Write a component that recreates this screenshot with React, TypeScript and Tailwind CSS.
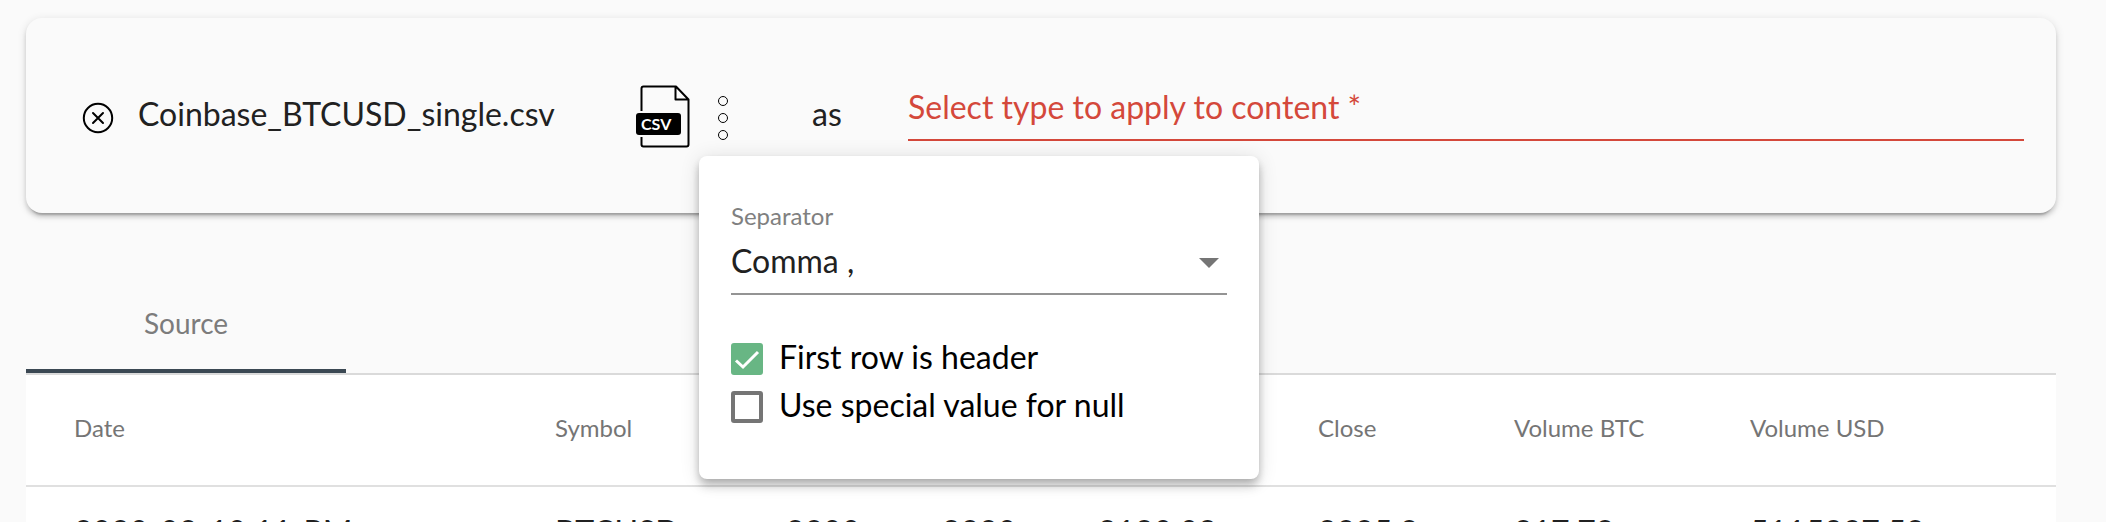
import { useState } from "react";

const columns = ["Date", "Symbol", "Open", "High", "Low", "Close", "Volume BTC", "Volume USD"];
const widths = ["w-[529px]", "w-[231px]", "w-[156px]", "w-[156px]", "w-[220px]", "w-[196px]", "w-[236px]", ""];
const rows = [["2020-03-10 11-PM", "BTCUSD", "8300", "8330", "8180.08", "8325.2", "817.78", "5115937.58"]];

function CloseIcon() {
  return (
    <svg className="size-8" viewBox="0 0 32 32" fill="none" stroke="#000" strokeWidth="2" strokeLinecap="round">
      <circle cx="16" cy="16" r="14.2" />
      <path d="M11 11l10 10M21 11L11 21" />
    </svg>
  );
}

function CsvIcon() {
  return (
    <svg className="h-16 w-14 shrink-0" viewBox="0 0 56 64">
      <path d="M7.5 27V4.5a2 2 0 0 1 2-2H42L54.500 15.500V60.500a2 2 0 0 1-2 2H9.500a2 2 0 0 1-2-2V53M41.500 2.500V15.500H54.500" fill="none" stroke="#000" strokeWidth="2" strokeLinejoin="round" />
      <rect x="2" y="29" width="45" height="22" rx="3" fill="#000" />
      <text x="7" y="46" fill="#fff" fontFamily="Lato, sans-serif" fontSize="16" fontWeight="700">CSV</text>
    </svg>
  );
}

export default function App() {
  const [header, setHeader] = useState(true);
  const [special, setSpecial] = useState(false);
  const box = "size-8 shrink-0 appearance-none rounded-[3px] border-4 border-[#757575] bg-white checked:border-[#68b684] checked:bg-[#68b684]";
  return (
    <main className="h-screen overflow-hidden bg-[#fafafa] pt-[18px] pr-[50px] pl-[26px] font-['Lato',sans-serif] text-[#212121]">
      <section className="relative flex h-[195px] items-center rounded-2xl bg-[#fafafa] pr-8 pl-14 text-[32px] leading-10 shadow-[0_6px_2px_-4px_rgba(0,0,0,0.2),0_4px_4px_rgba(0,0,0,0.14),0_2px_10px_rgba(0,0,0,0.12)]">
        <button aria-label="Remove file" className="mr-6 pt-1"><CloseIcon /></button>
        <span className="w-[496px] pb-1">Coinbase_BTCUSD_single.csv</span>
        <CsvIcon />
        <button aria-label="File options" className="ml-6 pt-1">
          <svg className="h-12 w-[18px]" viewBox="0 0 18 48" fill="none" stroke="#000" strokeWidth="1">
            <circle cx="9" cy="7" r="4.500" /><circle cx="9" cy="24" r="4.500" /><circle cx="9" cy="41" r="4.500" />
          </svg>
        </button>
        <span className="ml-20 w-24 pb-1">as</span>
        <div className="flex-1 pb-1">
          <button className="w-full border-b-2 border-[#d4483b] pb-3 text-left text-[#d4483b]">Select type to apply to content *</button>
        </div>
        <div className="absolute top-[138px] left-[673px] z-10 w-[560px] rounded-lg bg-white px-8 pt-11 pb-13 shadow-[0_4px_8px_-2px_rgba(0,0,0,0.2),0_8px_10px_rgba(0,0,0,0.14),0_2px_20px_rgba(0,0,0,0.12)]">
          <label htmlFor="separator" className="block text-2xl text-[#808080]">Separator</label>
          <div className="relative border-b-2 border-[#949494]">
            <select id="separator" className="h-[61px] w-full appearance-none bg-transparent pb-1 outline-none">
              <option>Comma ,</option>
              <option>Semicolon ;</option>
            </select>
            <svg className="pointer-events-none absolute top-[26px] right-2 h-[10px] w-5" viewBox="0 0 20 10"><path d="M0 0H20L10 10Z" fill="#757575" /></svg>
          </div>
          <div className="mt-11 flex flex-col gap-2 text-black">
            <label className="relative flex h-10 items-center gap-4">
              <input type="checkbox" checked={header} onChange={(e) => setHeader(e.target.checked)} className={box} />
              {header && <svg className="pointer-events-none absolute left-0 size-8" viewBox="0 0 32 32"><path d="M5 17.500L12 24L27 9" fill="none" stroke="#fff" strokeWidth="3" /></svg>}
              <span className="pb-1">First row is header</span>
            </label>
            <label className="flex h-10 items-center gap-4">
              <input type="checkbox" checked={special} onChange={(e) => setSpecial(e.target.checked)} className={box} />
              <span className="pb-1">Use special value for null</span>
            </label>
          </div>
        </div>
      </section>
      <div role="tablist" className="mt-[60px] flex border-b-2 border-[#dadada]">
        <button role="tab" aria-selected="true" className="h-[100px] w-80 border-b-4 border-[#3b4853] pt-1 text-[28px] text-[#7c7c7c]">Source</button>
      </div>
      <table className="w-full table-fixed bg-white text-left">
        <thead>
          <tr className="h-[111px] border-b-2 border-[#e0e0e0]">
            {columns.map((c, i) => <th key={c} className={`${widths[i]} pb-1 text-2xl font-normal text-[#757575] first:pl-12`}>{c}</th>)}
          </tr>
        </thead>
        <tbody>
          {rows.map((r) => (
            <tr key={r[0]} className="h-[90px] text-[32px] leading-10">
              {r.map((v, i) => <td key={columns[i]} className="whitespace-nowrap first:pl-12">{v}</td>)}
            </tr>
          ))}
        </tbody>
      </table>
    </main>
  );
}
